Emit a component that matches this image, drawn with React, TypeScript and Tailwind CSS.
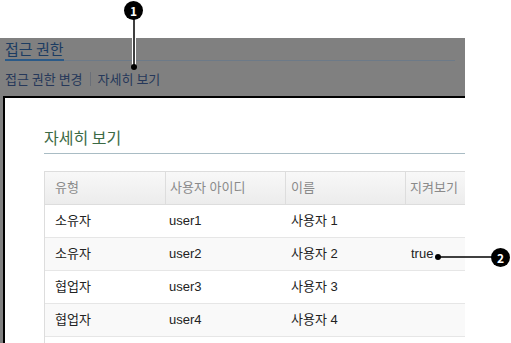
import React from "react";

const rows = [
  { type: "소유자", id: "user1", name: "사용자 1", watch: "" },
  { type: "소유자", id: "user2", name: "사용자 2", watch: "true" },
  { type: "협업자", id: "user3", name: "사용자 3", watch: "" },
  { type: "협업자", id: "user4", name: "사용자 4", watch: "" },
  { type: "", id: "", name: "", watch: "" },
];

function Badge({ n, className }: { n: string; className: string }) {
  return (
    <div
      className={
        "absolute flex h-[19px] w-[19px] items-center justify-center rounded-full bg-black text-[12px] font-bold leading-none text-white " +
        className
      }
    >
      {n}
    </div>
  );
}

export default function App() {
  return (
    <div className="relative h-[343px] w-[511px] overflow-hidden bg-white font-['Noto_Sans_CJK_KR','Liberation_Sans',sans-serif]">
      <div className="h-[38px]" />

      {/* captured page */}
      <div className="flex h-[305px] w-[465px] flex-col overflow-hidden">
        {/* dimmed header */}
        <div className="flex h-[58px] shrink-0 flex-col bg-[#808080] pl-[5px]">
          <div className="mt-[2px] flex h-[21px] w-[450px] items-end border-b border-[#6d7a88]">
            <span className="-mb-px border-b-2 border-[#2b5a88] pb-[1px] text-[15px] leading-[18px] text-[#1c3c62]">
              접근 권한
            </span>
          </div>
          <div className="mt-[10px] flex items-center text-[13px] leading-[16px] text-[#26385a]">
            <span>접근 권한 변경</span>
            <span className="mx-[7px] h-[14px] w-px bg-[#6a6f78]" />
            <span>자세히 보기</span>
          </div>
        </div>

        {/* frame */}
        <div className="flex min-h-0 flex-1">
          <div className="w-[3px] shrink-0 bg-[#808080]" />
          <div className="min-w-0 flex-1 border-l-2 border-t-2 border-black pl-[39px] pt-[30px]">
            <div className="border-b border-[#a9bcc4] pb-[6px] text-[16px] leading-[19px] text-[#3b6a45]">
              자세히 보기
            </div>

            <div className="mt-[17px] w-[440px] border-l border-[#dddddd] font-['Liberation_Sans','Noto_Sans_CJK_KR',sans-serif] text-[13px]">
              <div className="grid h-[34px] grid-cols-[121px_120px_120px_79px] border-y border-[#dddddd] bg-gradient-to-b from-[#f8f8f8] to-[#ececec] text-[#8a8a8a]">
                <div className="flex items-center border-r border-[#dddddd] pl-[10px]">유형</div>
                <div className="flex items-center border-r border-[#dddddd] pl-[4px]">사용자 아이디</div>
                <div className="flex items-center border-r border-[#dddddd] pl-[5px]">이름</div>
                <div className="flex items-center pl-[4px]">지켜보기</div>
              </div>
              {rows.map((r, i) => (
                <div
                  key={i}
                  className={
                    "grid h-[33px] grid-cols-[121px_120px_120px_79px] border-b border-[#e6e6e6] text-[#222222] " +
                    (i % 2 === 1 ? "bg-[#f9f9f9]" : "bg-white")
                  }
                >
                  <div className="flex items-center pl-[10px]">{r.type}</div>
                  <div className="flex items-center pl-[3px]">{r.id}</div>
                  <div className="flex items-center pl-[5px]">{r.name}</div>
                  <div className="flex items-center pl-[5px]">{r.watch}</div>
                </div>
              ))}
            </div>
          </div>
        </div>
      </div>

      {/* callouts */}
      <svg className="pointer-events-none absolute inset-0" width="511" height="343">
        <line x1="134" y1="18" x2="134" y2="67" stroke="#ffffff" strokeWidth="4" />
        <line x1="134" y1="18" x2="134" y2="67" stroke="#000000" strokeWidth="1.5" />
        <circle cx="134" cy="67" r="3" fill="#000000" />
        <line x1="438" y1="257" x2="492" y2="257" stroke="#000000" strokeWidth="1.5" />
        <circle cx="438" cy="257" r="3" fill="#000000" />
      </svg>
      <Badge n="1" className="left-[124px] top-[1px]" />
      <Badge n="2" className="left-[491px] top-[248px]" />
    </div>
  );
}
